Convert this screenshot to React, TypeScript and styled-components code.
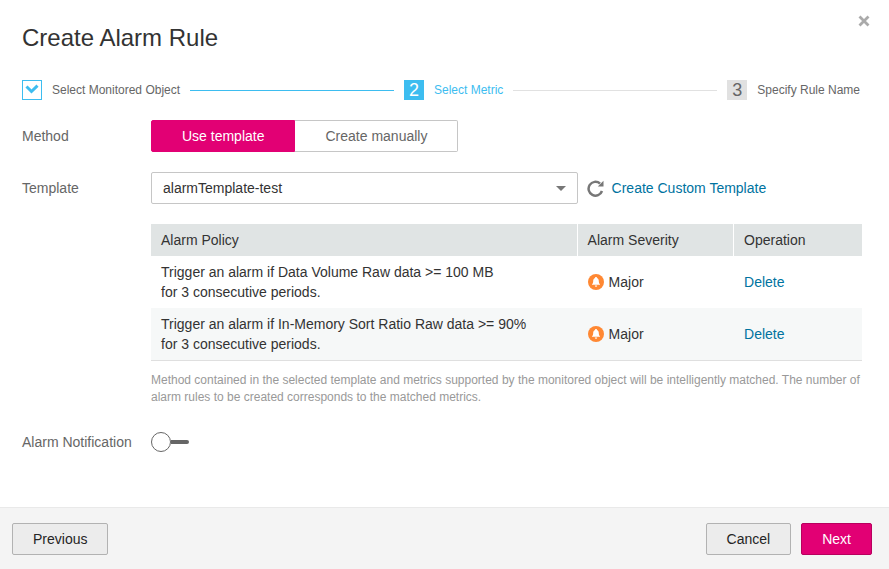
import React, { useState } from "react";
import styled, { createGlobalStyle, css } from "styled-components";

const color = {
  brand: "#e20074",
  brandDark: "#b8005e",
  accent: "#3dbdf0",
  link: "#00739f",
  text: "#333333",
  muted: "#666666",
  hint: "#999999",
  line: "#e1e1e1",
  border: "#c6c6c6",
};

const GlobalStyle = createGlobalStyle`
  *, *::before, *::after { box-sizing: border-box; }
  body {
    margin: 0;
    background: #fff;
    color: ${color.text};
    font: 14px/20px "Liberation Sans", Arial, sans-serif;
  }
  button, select, input { font: inherit; }
`;

const Dialog = styled.main`
  display: flex;
  flex-direction: column;
  min-height: 100vh;
`;

const Header = styled.header`
  display: flex;
  justify-content: space-between;
  align-items: flex-start;
  padding: 14px 18px 0 22px;
`;

const Title = styled.h1`
  margin: 8px 0 0;
  font-size: 24px;
  font-weight: 400;
  line-height: 32px;
`;

const CloseButton = styled.button`
  display: flex;
  padding: 1px;
  border: 0;
  background: none;
  color: #aaaaaa;
  cursor: pointer;
`;

const Body = styled.div`
  display: flex;
  flex-direction: column;
  gap: 20px;
  padding: 26px 27px 24px 22px;
`;

type StepState = "done" | "current" | "next";

const StepList = styled.ol`
  display: flex;
  align-items: center;
  gap: 10px;
  margin: 0;
  padding: 0 2px 0 0;
  list-style: none;
`;

const Step = styled.li<{ $state: StepState }>`
  display: flex;
  align-items: center;
  gap: 10px;
  color: ${(p) => (p.$state === "current" ? color.accent : color.muted)};
  font-size: 12px;
  white-space: nowrap;
`;

const StepMark = styled.span<{ $state: StepState }>`
  display: flex;
  align-items: center;
  justify-content: center;
  width: 20px;
  height: 20px;
  font-size: 18px;
  ${(p) =>
    p.$state === "done" &&
    css`
      border: 1px solid ${color.accent};
      color: ${color.accent};
    `}
  ${(p) =>
    p.$state === "current" &&
    css`
      background: ${color.accent};
      color: #fff;
    `}
  ${(p) =>
    p.$state === "next" &&
    css`
      background: ${color.line};
      color: ${color.muted};
    `}
`;

const StepLine = styled.li<{ $done?: boolean }>`
  flex: 1;
  height: 1px;
  background: ${(p) => (p.$done ? color.accent : color.line)};
`;

const Field = styled.div`
  display: grid;
  grid-template-columns: 129px minmax(0, 1fr);
`;

const FieldLabel = styled.label`
  color: ${color.muted};
  line-height: 32px;
`;

const FieldName = styled.span`
  color: ${color.muted};
  line-height: 32px;
`;

const Segments = styled.div`
  display: flex;
`;

const Segment = styled.button<{ $active: boolean }>`
  height: 32px;
  padding: 0 30px;
  border: 1px solid ${(p) => (p.$active ? color.brand : color.border)};
  background: ${(p) => (p.$active ? color.brand : "#fff")};
  color: ${(p) => (p.$active ? "#fff" : color.muted)};
  cursor: pointer;
  &:first-child { border-radius: 2px 0 0 2px; }
  &:last-child { border-radius: 0 2px 2px 0; border-left-width: 0; }
`;

const TemplateRow = styled.div`
  display: flex;
  align-items: center;
`;

const SelectBox = styled.div`
  display: grid;
  flex: 0 0 60%;
  align-items: center;
  > * { grid-area: 1 / 1; }
  > svg { justify-self: end; margin-right: 12px; pointer-events: none; }
`;

const Select = styled.select`
  appearance: none;
  width: 100%;
  height: 32px;
  padding: 0 32px 0 11px;
  border: 1px solid ${color.border};
  border-radius: 2px;
  background: #fff;
  color: ${color.text};
`;

const RefreshButton = styled.button`
  display: flex;
  margin: 0 8px 0 9px;
  padding: 0;
  border: 0;
  background: none;
  cursor: pointer;
`;

const Link = styled.a`
  color: ${color.link};
  text-decoration: none;
`;

const Table = styled.table`
  width: 100%;
  table-layout: fixed;
  border-collapse: separate;
  border-spacing: 0;
  border-bottom: 1px solid #dfdfdf;
`;

const Col = styled.col<{ $width: number }>`
  width: ${(p) => p.$width}%;
`;

const HeadCell = styled.th`
  height: 32px;
  padding: 0 10px;
  border-right: 1px solid #fff;
  background: #e0e4e4;
  font-weight: 400;
  text-align: left;
  &:last-child { border-right: 0; }
`;

const BodyRow = styled.tr`
  &:nth-child(even) { background: #f6f8f8; }
`;

const Cell = styled.td`
  padding: 6px 10px;
`;

const Severity = styled.span`
  display: flex;
  align-items: center;
  gap: 5px;
`;

const Hint = styled.p`
  margin: 11px 0 0;
  color: ${color.hint};
  font-size: 12px;
  line-height: 17px;
`;

const Switch = styled.input`
  appearance: none;
  display: flex;
  align-items: center;
  align-self: center;
  width: 38px;
  height: 20px;
  margin: 0;
  cursor: pointer;
  &::before {
    content: "";
    width: 20px;
    height: 20px;
    border: 1px solid ${color.muted};
    border-radius: 50%;
    background: #fff;
  }
  &::after {
    content: "";
    flex: 1;
    height: 4px;
    border-radius: 0 2px 2px 0;
    background: ${color.muted};
  }
  &:checked { flex-direction: row-reverse; }
  &:checked::after { border-radius: 2px 0 0 2px; background: ${color.brand}; }
`;

const Footer = styled.footer`
  display: flex;
  gap: 10px;
  margin-top: auto;
  padding: 15px 17px 14px 12px;
  border-top: 1px solid #e9e9e9;
  background: #f4f4f4;
`;

const Button = styled.button<{ $primary?: boolean; $start?: boolean }>`
  height: 32px;
  margin-right: ${(p) => (p.$start ? "auto" : "0")};
  padding: 0 20px;
  border: 1px solid ${(p) => (p.$primary ? color.brandDark : "#b2b2b2")};
  border-radius: 2px;
  background: ${(p) => (p.$primary ? color.brand : "#ececec")};
  color: ${(p) => (p.$primary ? "#fff" : "#252525")};
  cursor: pointer;
`;

const CloseIcon = () => (
  <svg width="12" height="12" viewBox="0 0 12 12" aria-hidden="true">
    <path d="M1.500 1.500 10.500 10.500M10.500 1.500 1.500 10.500" fill="none" stroke="currentColor" strokeWidth="2.8" />
  </svg>
);

const CheckIcon = () => (
  <svg width="14" height="14" viewBox="0 0 14 14" aria-hidden="true">
    <path d="M1.500 3.500 6.500 8.500 12.500 2.700" fill="none" stroke="currentColor" strokeWidth="3" />
  </svg>
);

const CaretIcon = () => (
  <svg width="10" height="5" viewBox="0 0 10 5" aria-hidden="true">
    <path d="M0 0H10L5 5Z" fill="#777" />
  </svg>
);

const RefreshIcon = () => (
  <svg width="17" height="17" viewBox="0 0 17 17" aria-hidden="true">
    <path d="M13 3.500A6.900 6.900 0 1 0 15 11" fill="none" stroke="#777" strokeWidth="2.5" />
    <path d="M16.500 0.800V6.500H10.800Z" fill="#777" />
  </svg>
);

const BellIcon = () => (
  <svg width="16" height="16" viewBox="0 0 16 16" aria-hidden="true">
    <circle cx="8" cy="8" r="8" fill="#ff8833" />
    <path d="M8 3C8.600 3 9 3.400 9 4C10.300 4.500 10.800 5.600 10.800 7C10.800 8.700 11.200 9.500 12 10.200V10.800H4V10.200C4.800 9.500 5.200 8.700 5.200 7C5.200 5.600 5.700 4.500 7 4C7 3.400 7.400 3 8 3Z" fill="#fff" />
    <path d="M6.800 11.500H9.200A1.200 1.200 0 0 1 6.800 11.500Z" fill="#fff" />
  </svg>
);

const policies = [
  { metric: "Trigger an alarm if Data Volume Raw data >= 100 MB", period: "for 3 consecutive periods.", severity: "Major" },
  { metric: "Trigger an alarm if In-Memory Sort Ratio Raw data >= 90%", period: "for 3 consecutive periods.", severity: "Major" },
];

export default function App() {
  const [manual, setManual] = useState(false);
  const [notify, setNotify] = useState(false);

  return (
    <>
      <GlobalStyle />
      <Dialog>
        <Header>
          <Title>Create Alarm Rule</Title>
          <CloseButton type="button" aria-label="Close"><CloseIcon /></CloseButton>
        </Header>
        <Body>
          <StepList>
            <Step $state="done">
              <StepMark $state="done"><CheckIcon /></StepMark>
              Select Monitored Object
            </Step>
            <StepLine $done aria-hidden="true" />
            <Step $state="current" aria-current="step">
              <StepMark $state="current">2</StepMark>
              Select Metric
            </Step>
            <StepLine aria-hidden="true" />
            <Step $state="next">
              <StepMark $state="next">3</StepMark>
              Specify Rule Name
            </Step>
          </StepList>

          <Field>
            <FieldName id="method">Method</FieldName>
            <Segments role="group" aria-labelledby="method">
              <Segment type="button" $active={!manual} aria-pressed={!manual} onClick={() => setManual(false)}>
                Use template
              </Segment>
              <Segment type="button" $active={manual} aria-pressed={manual} onClick={() => setManual(true)}>
                Create manually
              </Segment>
            </Segments>
          </Field>

          <Field>
            <FieldLabel htmlFor="template">Template</FieldLabel>
            <TemplateRow>
              <SelectBox>
                <Select id="template">
                  <option>alarmTemplate-test</option>
                </Select>
                <CaretIcon />
              </SelectBox>
              <RefreshButton type="button" aria-label="Refresh"><RefreshIcon /></RefreshButton>
              <Link href="#custom">Create Custom Template</Link>
            </TemplateRow>
          </Field>

          <Field>
            <span />
            <div>
              <Table>
                <colgroup>
                  <Col $width={60} />
                  <Col $width={22} />
                  <Col $width={18} />
                </colgroup>
                <thead>
                  <tr>
                    <HeadCell scope="col">Alarm Policy</HeadCell>
                    <HeadCell scope="col">Alarm Severity</HeadCell>
                    <HeadCell scope="col">Operation</HeadCell>
                  </tr>
                </thead>
                <tbody>
                  {policies.map((policy) => (
                    <BodyRow key={policy.metric}>
                      <Cell>
                        {policy.metric}
                        <br />
                        {policy.period}
                      </Cell>
                      <Cell>
                        <Severity><BellIcon />{policy.severity}</Severity>
                      </Cell>
                      <Cell><Link href="#delete">Delete</Link></Cell>
                    </BodyRow>
                  ))}
                </tbody>
              </Table>
              <Hint>
                Method contained in the selected template and metrics supported by the monitored object will be
                intelligently matched. The number of alarm rules to be created corresponds to the matched metrics.
              </Hint>
            </div>
          </Field>

          <Field>
            <FieldLabel htmlFor="notify">Alarm Notification</FieldLabel>
            <Switch
              id="notify"
              type="checkbox"
              role="switch"
              checked={notify}
              onChange={(e) => setNotify(e.target.checked)}
            />
          </Field>
        </Body>
        <Footer>
          <Button type="button" $start>Previous</Button>
          <Button type="button">Cancel</Button>
          <Button type="button" $primary>Next</Button>
        </Footer>
      </Dialog>
    </>
  );
}
